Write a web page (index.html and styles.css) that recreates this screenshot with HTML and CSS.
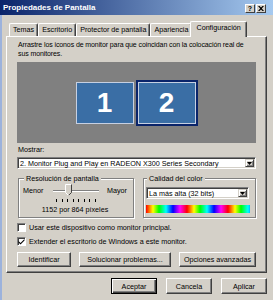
FILE: index.html
```html
<!DOCTYPE html>
<html lang="es">
<head>
<meta charset="utf-8">
<title>Propiedades de Pantalla</title>
<link rel="stylesheet" href="styles.css">
</head>
<body>
<div class="window">
  <div class="titlebar">
    <span class="title">Propiedades de Pantalla</span>
    <div class="title-btns">
      <span class="tbtn">?</span>
      <span class="tbtn"><svg width="6" height="5" viewBox="0 0 6 5"><path d="M0 0h1.5L3 1.6 4.5 0H6L3.8 2.5 6 5H4.5L3 3.4 1.5 5H0l2.2-2.5z" fill="#000"/></svg></span>
    </div>
  </div>
  <div class="frame">
    <div class="tabs">
      <span class="tab">Temas</span>
      <span class="tab">Escritorio</span>
      <span class="tab">Protector de pantalla</span>
      <span class="tab">Apariencia</span>
      <span class="tab active">Configuración</span>
    </div>
    <div class="panel">
      <p class="intro">Arrastre los iconos de monitor para que coincidan con la colocación real de<br>sus monitores.</p>
      <div class="monitors">
        <div class="mon">1</div>
        <div class="mon selected">2</div>
      </div>
      <div class="lbl">Mostrar:</div>
      <div class="combo">
        <span class="combo-val">2. Monitor Plug and Play en RADEON X300 Series Secondary</span>
        <span class="drop"><svg width="5" height="3" viewBox="0 0 5 3"><path d="M0 0h5L2.5 3z" fill="#000"/></svg></span>
      </div>
      <div class="groups">
        <div class="group">
          <div class="group-title">Resolución de pantalla</div>
          <div class="slider-row">
            <span class="end">Menor</span>
            <div class="slider">
              <div class="track-area">
                <div class="track"></div>
                <svg class="thumb" width="7" height="12" viewBox="0 0 7 12"><path d="M0.5 0.5h6v8l-3 3-3-3z" fill="#d4d0c8"/><path d="M0.5 8.5v-8h6" fill="none" stroke="#fff"/><path d="M6.5 0.5v8l-3 3" fill="none" stroke="#404040"/><path d="M0.5 8.5l3 3" fill="none" stroke="#fff"/></svg>
              </div>
              <div class="ticks"><i></i><i></i><i></i><i></i><i></i><i></i><i></i><i></i></div>
            </div>
            <span class="end">Mayor</span>
          </div>
          <div class="res-val">1152 por 864 píxeles</div>
        </div>
        <div class="group color">
          <div class="group-title">Calidad del color</div>
          <div class="combo small">
            <span class="combo-val">La más alta (32 bits)</span>
            <span class="drop"><svg width="5" height="3" viewBox="0 0 5 3"><path d="M0 0h5L2.5 3z" fill="#000"/></svg></span>
          </div>
          <div class="spectrum"></div>
        </div>
      </div>
      <div class="check first"><span class="box"></span>Usar este dispositivo como monitor principal.</div>
      <div class="check"><span class="box"><svg width="7" height="7" viewBox="0 0 7 7"><path d="M0.5 3l2 2 4-4v1.6l-4 4-2-2z" fill="#000"/></svg></span>Extender el escritorio de Windows a este monitor.</div>
      <div class="actions">
        <button class="btn">Identificar</button>
        <button class="btn">Solucionar problemas...</button>
        <button class="btn">Opciones avanzadas</button>
      </div>
    </div>
    <div class="footer">
      <button class="btn big default">Aceptar</button>
      <button class="btn big">Cancela</button>
      <button class="btn big">Aplicar</button>
    </div>
  </div>
</div>
</body>
</html>
```
FILE: styles.css
```css
* { box-sizing: border-box; }
html, body { margin: 0; padding: 0; }
body {
  width: 273px;
  height: 300px;
  overflow: hidden;
  background: #d4d0c8;
  font-family: "Liberation Sans", Arial, sans-serif;
  font-size: 7.2px;
  line-height: 9px;
  color: #000;
}
.window {
  width: 273px;
  height: 300px;
  background: #d4d0c8;
  display: flex;
  flex-direction: column;
}
.titlebar {
  height: 15px;
  flex: none;
  background: linear-gradient(90deg, #0a246a, #a6caf0);
  display: flex;
  align-items: center;
  justify-content: space-between;
  padding: 0 7px 0 3px;
}
.title {
  color: #fff;
  font-weight: bold;
  font-size: 8px;
  line-height: 10px;
}
.title-btns {
  display: flex;
  gap: 1px;
  margin-top: 2px;
}
.tbtn {
  width: 10px;
  height: 9px;
  background: #d4d0c8;
  border: 1px solid;
  border-color: #fff #404040 #404040 #fff;
  display: flex;
  align-items: center;
  justify-content: center;
  font-weight: bold;
  font-size: 7px;
  line-height: 7px;
}
.frame {
  flex: 1;
  border-left: 2px solid #9cb2dc;
  padding: 6px 6px 0 4px;
}
.tabs {
  display: flex;
  align-items: flex-end;
  height: 15px;
  padding-left: 3px;
}
.tab {
  height: 13px;
  padding: 0 3px;
  line-height: 11px;
  border: 1px solid;
  border-bottom: none;
  border-color: #fff #404040 #404040 #fff;
  border-radius: 2px 2px 0 0;
  box-shadow: inset -1px 0 #808080;
  white-space: nowrap;
  background: #d4d0c8;
}
.tab.active {
  height: 16px;
  margin: 0 -2px -1px;
  padding: 1px 5px 0;
  line-height: 9px;
  position: relative;
  z-index: 2;
}
.panel {
  height: 237px;
  border: 1px solid;
  border-color: #fff #404040 #404040 #fff;
  box-shadow: inset -1px -1px #808080;
  padding: 3px 10px 5px;
  display: flex;
  flex-direction: column;
}
.intro {
  margin: 0;
  padding-left: 1px;
  font-size: 7px;
  letter-spacing: -0.1px;
  white-space: nowrap;
}
.monitors {
  margin-top: 4px;
  height: 81px;
  flex: none;
  background: #808080;
  display: flex;
  align-items: center;
  justify-content: center;
  gap: 2px;
}
.mon {
  width: 58px;
  height: 42px;
  background: #3a6ea5;
  border: 1px solid #c6d0e2;
  display: flex;
  align-items: center;
  justify-content: center;
  color: #fff;
  font-weight: bold;
  font-size: 28px;
  line-height: 28px;
}
.mon.selected {
  width: 62px;
  height: 46px;
  border: 2px solid #0a246a;
  box-shadow: inset 0 0 0 1px #c6d0e2;
}
.lbl {
  margin-top: 2px;
  padding-left: 1px;
}
.combo {
  margin-top: 3px;
  height: 12px;
  flex: none;
  background: #fff;
  border: 1px solid;
  border-color: #808080 #fff #fff #808080;
  box-shadow: inset 1px 1px #404040, inset -1px -1px #d4d0c8;
  display: flex;
  align-items: center;
  justify-content: space-between;
  padding: 1px 1px 1px 2px;
  white-space: nowrap;
}
.combo-val {
  line-height: 9px;
}
.drop {
  width: 9px;
  height: 8px;
  background: #d4d0c8;
  border: 1px solid;
  border-color: #d4d0c8 #404040 #404040 #d4d0c8;
  box-shadow: inset 1px 1px #fff, inset -1px -1px #808080;
  display: flex;
  align-items: center;
  justify-content: center;
}
.groups {
  margin-top: 9px;
  margin-left: 1px;
  display: grid;
  grid-template-columns: 116px 1fr;
  gap: 9px;
}
.group {
  border: 1px solid #808080;
  box-shadow: inset 1px 1px #fff, 1px 1px #fff;
  padding: 0 6px 2px 4px;
  height: 40px;
}
.group-title {
  display: table;
  margin: -5px 0 0 1px;
  padding: 0 2px;
  background: #d4d0c8;
  line-height: 9px;
}
.slider-row {
  margin-top: 1px;
  display: flex;
  align-items: flex-start;
  gap: 10px;
}
.end {
  margin-top: 2px;
}
.slider {
  width: 46px;
}
.track-area {
  height: 13px;
  display: flex;
  align-items: center;
  justify-content: flex-start;
}
.track {
  width: 46px;
  height: 2px;
  border-top: 1px solid #808080;
  border-bottom: 1px solid #fff;
}
.thumb {
  flex: none;
  margin-left: -34px;
  margin-top: -1px;
}
.ticks {
  margin-top: 2px;
  height: 3px;
  display: flex;
  justify-content: space-between;
  padding: 0 1px 0 3px;
}
.ticks i {
  width: 1px;
  height: 3px;
  background: #000;
}
.res-val {
  margin-top: 3px;
  text-align: center;
}
.group.color {
  padding: 0 6px 2px 2px;
}
.combo.small {
  margin-top: 4px;
}
.spectrum {
  margin-top: 6px;
  height: 8px;
  margin-right: -1px;
  background: repeating-linear-gradient(90deg, #ff0000 0, #ffff00 7px, #00ff00 13px, #00ffff 20px, #0000ff 27px, #ff00ff 34px, #ff0000 41px);
}
.check {
  margin-top: 4px;
  display: flex;
  align-items: center;
  gap: 3px;
  height: 10px;
  white-space: nowrap;
}
.box {
  width: 9px;
  height: 9px;
  flex: none;
  background: #fff;
  border: 1px solid;
  border-color: #808080 #fff #fff #808080;
  box-shadow: inset 1px 1px #404040;
  display: flex;
  align-items: center;
  justify-content: center;
}
.actions {
  margin-top: 6px;
  display: grid;
  grid-template-columns: 54px 92px 1fr;
  gap: 8px;
}
.btn {
  height: 15px;
  padding: 0;
  background: #d4d0c8;
  border: 1px solid;
  border-color: #fff #404040 #404040 #fff;
  box-shadow: inset -1px -1px #808080;
  font: inherit;
  color: #000;
  white-space: nowrap;
}
.footer {
  margin-top: 5px;
  display: flex;
  justify-content: flex-end;
  gap: 9px;
}
.btn.big {
  width: 46px;
  height: 16px;
}
.btn.default {
  border: 1px solid #000;
  box-shadow: inset 1px 1px #fff, inset -1px -1px #404040, inset -2px -2px #808080;
}
```
